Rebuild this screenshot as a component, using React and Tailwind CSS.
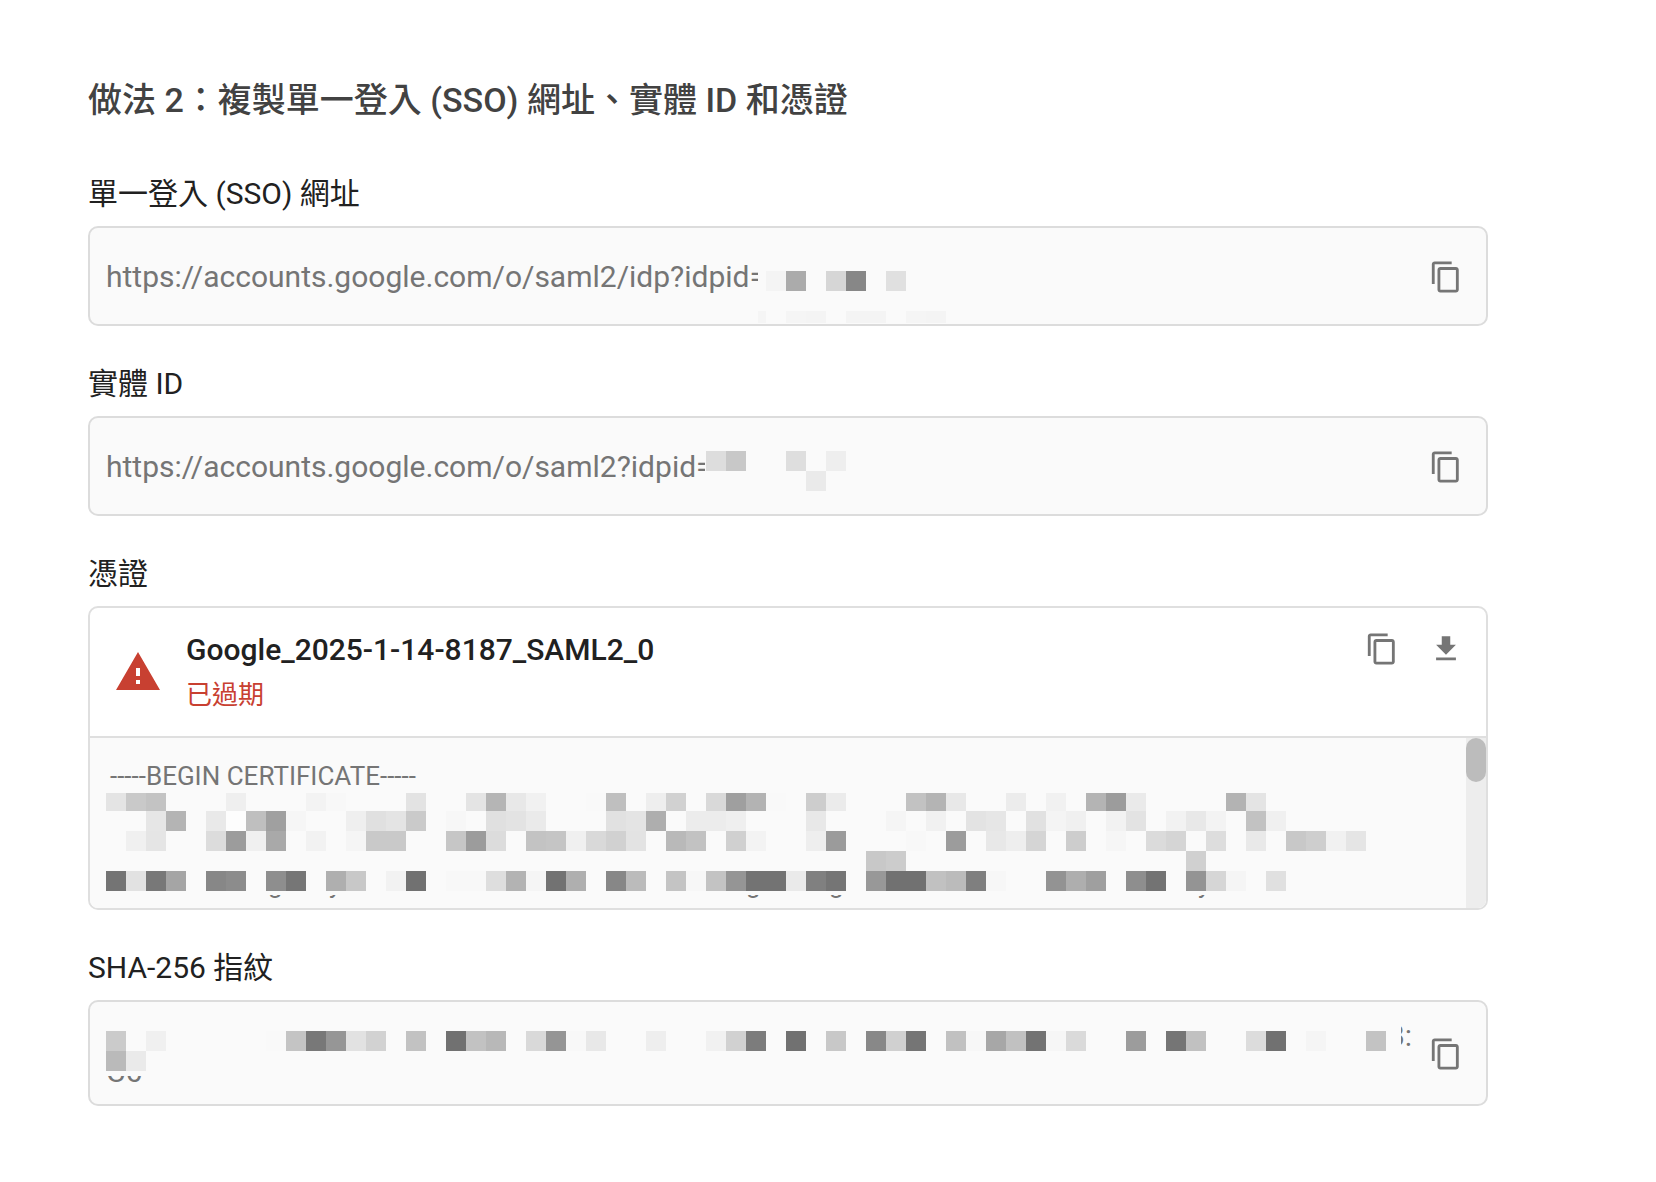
import React from 'react';

const CELL = 20;

const CopyIcon = () => (
	<svg viewBox="0 0 24 24" className="w-[34px] h-[34px] fill-current" aria-hidden="true">
		<path d="M16 1H4c-1.1 0-2 .9-2 2v14h2V3h12V1zm3 4H8c-1.1 0-2 .9-2 2v14c0 1.1.9 2 2 2h11c1.1 0 2-.9 2-2V7c0-1.1-.9-2-2-2zm0 16H8V7h11v14z" />
	</svg>
);

const DownloadIcon = () => (
	<svg viewBox="0 0 24 24" className="w-[34px] h-[34px] fill-current" aria-hidden="true">
		<path d="M19 9h-4V3H9v6H5l7 7 7-7zM5 18v2h14v-2H5z" />
	</svg>
);

const WarningIcon = () => (
	<svg viewBox="0 0 24 24" className="w-12 h-12 shrink-0 fill-[#c84031]" aria-hidden="true">
		<path d="M1 21h22L12 2 1 21zm12-3h-2v-2h2v2zm0-4h-2v-4h2v4z" />
	</svg>
);

const IconButton = ({ label, children }) => (
	<button type="button" aria-label={label} className="shrink-0 text-[#757575] cursor-pointer">
		{children}
	</button>
);

// Each row is "column:grey" pairs, e.g. "0:e4 1:c9"
const Mosaic = ({ rows, height, covers = [], texts = [], fontSize = 30 }) => (
	<svg
		className="absolute left-4 top-0 pointer-events-none overflow-visible"
		width={1320}
		height={height}
		shapeRendering="crispEdges"
		aria-hidden="true"
	>
		{texts.map((t) => (
			<text key={`${t.x}-${t.y}`} x={t.x} y={t.y} fontSize={fontSize} fill="#757575">
				{t.value}
			</text>
		))}
		{covers.map((c) => (
			<rect key={`${c.x}-${c.y}`} x={c.x} y={c.y} width={c.w} height={c.h} fill={c.fill || '#fafafa'} />
		))}
		{rows.map((row) =>
			row.cells.split(' ').map((cell) => {
				const [col, grey] = cell.split(':');
				return (
					<rect
						key={`${row.y}-${col}`}
						x={Number(col) * CELL}
						y={row.y}
						width={CELL}
						height={row.h || CELL}
						fill={`#${grey}${grey}${grey}`}
					/>
				);
			})
		)}
	</svg>
);

const sso_rows = [
	{ y: 43, cells: '33:f4 34:ab 36:d6 37:87 39:e0' },
	{ y: 83, h: 12, cells: '34:f5 35:f4 37:f4 38:f4 40:f5 41:f4' },
];

const entity_rows = [
	{ y: 33, cells: '30:dd 31:c8 34:de 36:ee' },
	{ y: 53, cells: '35:ea' },
];

const cert_rows = [
	{ y: 55, h: 18, cells: '0:e4 1:c9 2:c3 6:ef 10:f3 11:f8 15:e3 18:e4 19:b5 20:e8 21:f1 24:f9 25:bf 27:ee 28:d1 30:d9 31:9f 32:b3 33:f9 35:cd 36:eb 40:c2 41:b4 42:e8 45:ec 47:f1 49:b4 50:9c 51:ea 56:b3 57:e4' },
	{ y: 73, cells: '2:e6 3:b4 5:e9 6:fd 7:bf 8:a0 9:f6 12:ef 13:e0 14:e4 15:ca 17:f7 19:e0 20:e3 21:ea 25:e1 26:e4 27:ae 29:ec 30:ec 31:ef 35:e8 39:f5 41:f1 43:e3 44:e6 46:e1 47:f4 48:f0 50:f2 51:e3 53:f2 54:e8 55:f3 57:c2 58:f0' },
	{ y: 93, cells: '1:f0 2:e5 5:dc 6:9c 7:f0 8:a9 10:f2 12:f5 13:c9 14:c9 17:c6 18:9c 19:dc 21:c3 22:c5 23:f0 24:d9 25:d1 26:e3 28:b9 29:c2 31:d0 32:f3 35:ee 36:9b 40:f8 42:9c 44:e8 45:ee 46:d5 48:cd 50:f6 52:db 53:d5 55:dd 57:e9 59:c8 60:ce 61:f1 62:e5' },
	{ y: 113, cells: '38:c8 39:cc 54:d0' },
	{ y: 133, cells: '0:74 1:e2 2:78 3:a5 5:87 6:8c 8:8e 9:76 11:af 12:c8 14:f2 15:71 17:f8 18:f8 19:de 20:b3 21:f5 22:72 23:af 25:87 26:bb 28:c4 29:f7 30:c3 31:95 32:73 33:73 34:ea 35:80 36:75 38:98 39:71 40:71 41:c1 42:bb 43:7f 44:f7 47:93 48:ae 49:9f 51:8e 52:73 54:94 55:d6 56:f5 58:e0' },
];

const sha_rows = [
	{ y: 29, cells: '0:cb 2:f0 8:f9 9:c4 10:78 11:96 12:e2 13:d2 15:c2 17:71 18:c2 19:b8 21:d9 22:95 23:f8 24:e8 27:ee 30:f1 31:d1 32:7c 34:71 36:c8 38:88 39:d0 40:75 42:c1 43:f7 44:a7 45:c1 46:73 47:f6 48:da 51:9c 53:75 54:c1 57:dc 58:71 60:f5 63:c3' },
	{ y: 49, cells: '0:ba 1:ea' },
];

const Field = ({ id, label, children }) => (
	<section aria-labelledby={id} className="flex flex-col gap-3">
		<h3 id={id} className="text-[30px] leading-10 text-[#212121]">
			{label}
		</h3>
		{children}
	</section>
);

const ValueBox = ({ value, className = 'pt-[29px] pb-[27px]', children }) => (
	<div
		className={`relative flex items-center justify-between border-2 border-[#dcdcdc] rounded-[10px] bg-[#fafafa] pl-4 pr-[23px] ${className}`}
	>
		<p className="text-[30px] leading-10 text-[#757575]">{value}</p>
		{children}
		<IconButton label="複製">
			<CopyIcon />
		</IconButton>
	</div>
);

const App = () => {
	return (
		<main
			lang="zh-TW"
			className="bg-white min-h-screen flex flex-col pt-20 pb-[76px] pl-[88px] pr-[168px] font-['Roboto','Noto_Sans_CJK_TC',sans-serif]"
		>
			<h2 className="text-[34px] leading-10 font-medium text-[#424242] mb-[54px]">
				做法 2：複製單一登入 (SSO) 網址、實體 ID 和憑證
			</h2>

			<div className="flex flex-col gap-[38px]">
				<Field id="sso-url" label="單一登入 (SSO) 網址">
					<ValueBox value="https://accounts.google.com/o/saml2/idp?idpid=">
						<Mosaic
							rows={sso_rows}
							height={96}
							covers={[
								{ x: 652, y: 20, w: 200, h: 60 },
								{ x: 652, y: 83, w: 8, h: 12, fill: '#f5f5f5' },
							]}
						/>
					</ValueBox>
				</Field>

				<Field id="entity-id" label="實體 ID">
					<ValueBox value="https://accounts.google.com/o/saml2?idpid=">
						<Mosaic rows={entity_rows} height={96} covers={[{ x: 599, y: 20, w: 200, h: 60 }]} />
					</ValueBox>
				</Field>

				<Field id="certificate" label="憑證">
					<div className="border-2 border-[#dfdfdf] rounded-[10px] overflow-hidden">
						<div className="flex items-start gap-6 pt-[22px] pb-[23px] pl-6 pr-[23px] border-b-2 border-[#dfdfdf]">
							<div className="flex-1 flex items-center gap-6">
								<WarningIcon />
								<div className="flex flex-col gap-[7px]">
									<p className="text-[30px] leading-10 font-medium text-[#212121]">Google_2025-1-14-8187_SAML2_0</p>
									<p className="text-[26px] leading-9 text-[#c84031]">已過期</p>
								</div>
							</div>
							<div className="flex gap-[30px] pt-[2px]">
								<IconButton label="複製憑證">
									<CopyIcon />
								</IconButton>
								<IconButton label="下載憑證">
									<DownloadIcon />
								</IconButton>
							</div>
						</div>
						<div className="relative flex justify-between bg-[#fafafa]">
							<p className="pt-5 pb-[114px] pl-5 text-[26px] leading-9 text-[#757575]">-----BEGIN CERTIFICATE-----</p>
							<Mosaic
								rows={cert_rows}
								height={170}
								fontSize={26}
								texts={[
									{ x: 162, y: 155, value: 'g' },
									{ x: 223, y: 155, value: 'y' },
									{ x: 640, y: 155, value: 'g' },
									{ x: 723, y: 155, value: 'g' },
									{ x: 1092, y: 155, value: 'y' },
								]}
								covers={[{ x: 0, y: 55, w: 1300, h: 102 }]}
							/>
							<div className="w-5 bg-[#ededed]">
								<div className="h-11 rounded-full bg-[#bcbcbc]" />
							</div>
						</div>
					</div>
				</Field>

				<Field id="sha-256" label="SHA-256 指紋">
					<ValueBox value="" className="pt-[35px] pb-[33px]">
						<Mosaic
							rows={sha_rows}
							height={102}
							texts={[
								{ x: 1280, y: 44, value: 'B:' },
								{ x: 0, y: 80, value: 'C6' },
							]}
							covers={[
								{ x: 1270, y: 15, w: 25, h: 40 },
								{ x: 0, y: 50, w: 60, h: 24 },
							]}
						/>
					</ValueBox>
				</Field>
			</div>
		</main>
	);
};

export default App;
